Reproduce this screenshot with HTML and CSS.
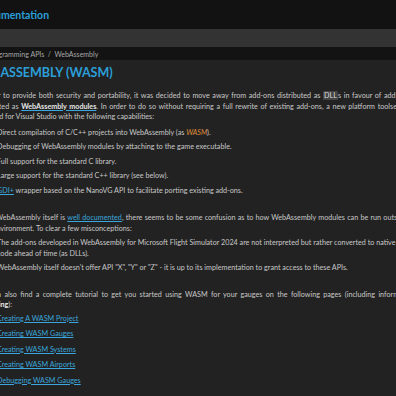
FILE: index.html
```html
<!DOCTYPE html>
<html lang="en">
<head>
    <meta charset="UTF-8">
    <meta name="viewport" content="width=device-width, initial-scale=1.0">
    <title>WebAssembly (WASM)</title>
    <link rel="stylesheet" href="styles.css">
</head>
<body>
    <div class="site">
        <header class="topbar">
            <span class="brand">Documentation</span>
        </header>
        <div class="searchbar"></div>
        <nav class="crumbs">Programming APIs&nbsp; / &nbsp;WebAssembly</nav>

        <main class="content">
            <h1>WebAssembly (WASM)</h1>

            <p class="lines">
                <span class="ln spread">In order to provide both security and portability, it was decided to move away from add-ons distributed as <code>DLL</code>s in favour of add-ons</span>
                <span class="ln spread">distributed as <a href="#" class="strong">WebAssembly modules</a>. In order to do so without requiring a full rewrite of existing add-ons, a new platform toolset was</span>
                <span class="ln">designed for Visual Studio with the following capabilities:</span>
            </p>
            <ul class="list">
                <li>Direct compilation of C/C++ projects into WebAssembly (as <em>WASM</em>).</li>
                <li>Debugging of WebAssembly modules by attaching to the game executable.</li>
                <li>Full support for the standard C library.</li>
                <li>Large support for the standard C++ library (see below).</li>
                <li><a href="#">GDI+</a> wrapper based on the NanoVG API to facilitate porting existing add-ons.</li>
            </ul>

            <p class="lines">
                <span class="ln slight">While WebAssembly itself is <a href="#">well documented</a>, there seems to be some confusion as to how WebAssembly modules can be run outside</span>
                <span class="ln">of an environment. To clear a few misconceptions:</span>
            </p>
            <ul class="list list-tight">
                <li class="lines">
                    <span class="ln">The add-ons developed in WebAssembly for Microsoft Flight Simulator 2024 are not interpreted but rather converted to native</span>
                    <span class="ln">code ahead of time (as DLLs).</span>
                </li>
                <li>WebAssembly itself doesn't offer API "X", "Y" or "Z" - it is up to its implementation to grant access to these APIs.</li>
            </ul>

            <p class="lines">
                <span class="ln wider">You can also find a complete tutorial to get you started using WASM for your gauges on the following pages (including information on</span>
                <span class="ln"><b>debugging</b>):</span>
            </p>
            <ul class="list links">
                <li><a href="#">Creating A WASM Project</a></li>
                <li><a href="#">Creating WASM Gauges</a></li>
                <li><a href="#">Creating WASM Systems</a></li>
                <li><a href="#">Creating WASM Airports</a></li>
                <li><a href="#">Debugging WASM Gauges</a></li>
            </ul>
        </main>
    </div>
</body>
</html>
```

FILE: styles.css
```css
html, body {
    margin: 0;
    height: 100%;
}
body {
    background: #222;
    color: #c8c8c8;
    font-family: Lato, 'Open Sans', sans-serif;
    overflow: hidden;
}
.site {
    margin-left: -25px;
    width: 470px;
}
.topbar {
    height: 29px;
    background: #121212;
    display: flex;
    align-items: center;
}
.brand {
    color: #2b9fd8;
    font-weight: 700;
    font-size: 10.5px;
    margin-left: 1px;
}
.searchbar {
    height: 18px;
    background: #333;
}
.crumbs {
    height: 13px;
    background: #131313;
    color: #a8a8a8;
    font-size: 7px;
    display: flex;
    align-items: center;
    padding-left: 13px;
}
.content {
    padding: 5px 0 0 0;
    font-size: 7.2px;
    line-height: 10.5px;
}
h1 {
    margin: 0 0 10px -3px;
    font-size: 12.5px;
    line-height: 16px;
    font-weight: 700;
    color: #2b9fd8;
    text-transform: uppercase;
}
p {
    margin: 0;
}
.lines .ln {
    display: block;
    white-space: nowrap;
}
.lines .spread {
    word-spacing: 0.8px;
}
.lines .slight {
    word-spacing: 0.4px;
}
.lines .wider {
    word-spacing: 1.5px;
}
a {
    color: #3aa6dc;
}
a.strong {
    color: #e6e6e6;
    font-weight: 700;
    text-decoration-color: #3aa6dc;
}
code {
    font-family: inherit;
    background: #444;
    color: #ddd;
    padding: 0 1px;
    border-radius: 1px;
}
em {
    color: #e08f3a;
}
b {
    color: #e6e6e6;
}
.list {
    list-style: none;
    margin: 5px 0 17px 0;
    padding-left: 22px;
}
.list li {
    margin-bottom: 4px;
}
.list-tight {
    margin-top: 4px;
    margin-bottom: 16px;
}
.links {
    margin-top: 3px;
}
.links li {
    margin-bottom: 5px;
}
```
